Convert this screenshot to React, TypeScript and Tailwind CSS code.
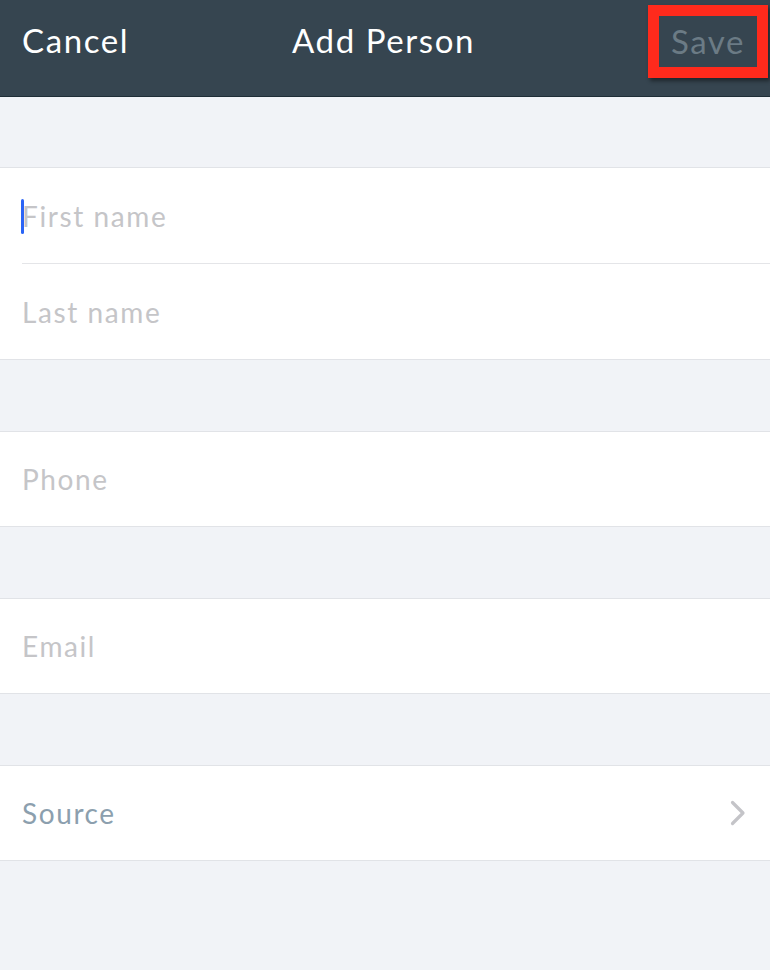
import React from "react";

const font = { fontFamily: "Lato, 'Open Sans', sans-serif" };

function Row({ label, h = "h-[94px]" }: { label: string; h?: string }) {
  return (
    <div className={`flex ${h} items-center bg-white pl-[22px] pr-[24px]`}>
      <span className="text-[28px] tracking-[1.6px] text-[#c5c5c8]">{label}</span>
    </div>
  );
}

export default function App() {
  return (
    <div className="flex min-h-[970px] w-[770px] flex-col bg-[#f1f3f7]" style={font}>
      <div className="relative flex h-[97px] items-center border-b border-[#1f2e37] bg-[#364550] px-[22px] pb-[15px]">
        <span className="text-[33px] tracking-[1.6px] text-white">Cancel</span>
        <span className="absolute left-[292px] top-[16px] text-[33px] tracking-[1.6px] text-white">Add Person</span>
        <div className="absolute left-[648px] top-[5px] flex h-[73px] w-[120px] items-center justify-center border-[11px] border-[#ff2a1c] shadow-[2px_3px_4px_rgba(0,0,0,0.45)]">
          <span className="text-[33px] tracking-[1.6px] text-[#6b7b85]">Save</span>
        </div>
      </div>

      <div className="mt-[70px] border-y border-[#e1e3e7] bg-white">
        <div className="relative flex h-[95px] items-center bg-white pl-[22px]">
          <div className="absolute left-[21px] top-[31px] h-[35px] w-[3px] rounded-full bg-[#2a64f6]" />
          <span className="text-[28px] tracking-[1.6px] text-[#c5c5c8]">First name</span>
        </div>
        <div className="ml-[22px] h-px bg-[#e4e5e8]" />
        <Row label="Last name" h="h-[95px]" />
      </div>

      <div className="mt-[71px] border-y border-[#e1e3e7]">
        <Row label="Phone" />
      </div>

      <div className="mt-[71px] border-y border-[#e1e3e7]">
        <Row label="Email" />
      </div>

      <div className="mt-[71px] border-y border-[#e1e3e7]">
        <div className="flex h-[94px] items-center justify-between bg-white pl-[22px] pr-[24px]">
          <span className="text-[28px] tracking-[1.6px] text-[#8c9fae]">Source</span>
          <svg width="16" height="26" viewBox="0 0 16 26" fill="none">
            <path d="M2.5 2.5 L13 13 L2.5 23.5" stroke="#c4c4c8" strokeWidth="3.2" strokeLinecap="round" strokeLinejoin="round" />
          </svg>
        </div>
      </div>
    </div>
  );
}
